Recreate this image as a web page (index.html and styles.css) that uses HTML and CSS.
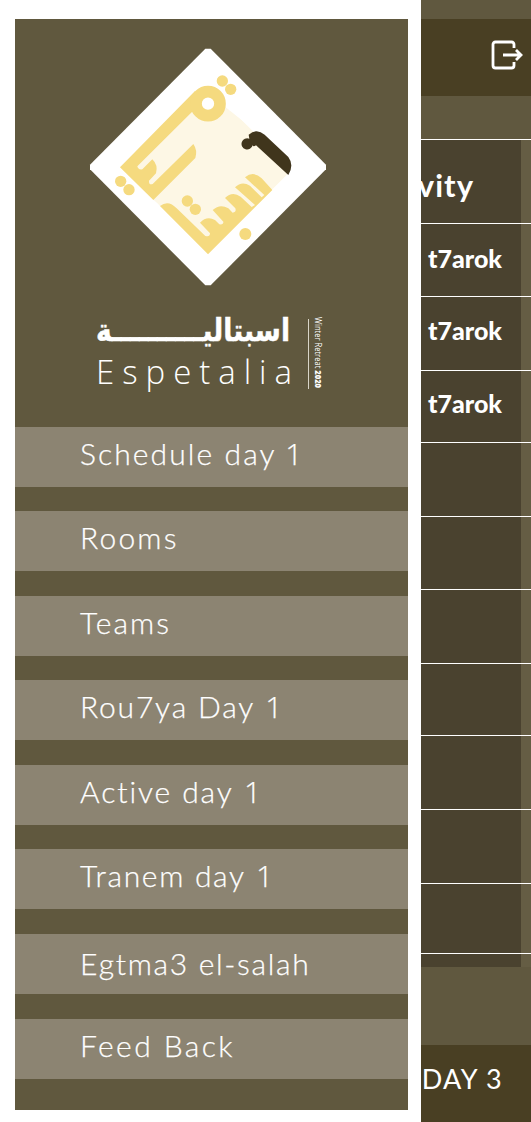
FILE: index.html
```html
<!DOCTYPE html>
<html lang="en">
<head>
<meta charset="utf-8">
<title>Espetalia</title>
<link rel="stylesheet" href="styles.css">
</head>
<body>
<div class="screen">
  <aside class="drawer">
    <svg class="emblem" viewBox="0 0 768 768" aria-hidden="true">
      <path fill="#fff" d="M376 26H392L738 374V388L392 736H376L30 388V374Z"/>
      <path fill="#fdf7e5" d="M384 140L628 382L620 405L384 640L120 382Z"/>
      <path fill="#fff" d="M425 175L530 255L520 268L435 200Z"/>
      <path fill="#fff" d="M110 382L232 490L384 650L374 655L225 500L105 392Z"/>
      <g fill="#f5da7f">
        <path d="M345 153L120 382L220 480L346 354Q353 330 340 312L218 432Q206 436 207 422L228 400Q235 375 217 358L187 388Q174 390 172 379L335 217L350 212Z"/>
        <path d="M240 498Q265 478 290 505L376 588Q390 592 390 580L360 548Q380 527 405 540L418 553Q431 555 430 545L398 510Q420 490 445 505L458 518Q470 517 466 505L435 474Q457 452 482 470L515 501L525 495L465 442Q485 422 510 437L545 472L553 465L495 412Q520 391 545 415L577 450L384 643Z"/>
        <circle cx="427" cy="123" r="17"/><circle cx="452" cy="148" r="17"/>
        <circle cx="122" cy="424" r="17"/><circle cx="147" cy="449" r="17"/>
        <circle cx="322" cy="483" r="17"/><circle cx="346" cy="508" r="17"/>
        <circle cx="496" cy="582" r="18"/>
      </g>
      <circle cx="384" cy="191" r="36" fill="#fff" stroke="#f5da7f" stroke-width="35"/>
      <path fill="#40351c" d="M506 284Q530 263 554 284L625 351Q643 375 625 405L528 316Q520 322 518 316A17 17 0 1 1 508 296Z"/>
    </svg>
    <svg class="wordmark" viewBox="80 300 256 110">
      <text class="wm-ar" x="96" y="341" textLength="194" lengthAdjust="spacingAndGlyphs" direction="ltr">اسبتاليــــــــــة</text>
      <text class="wm-en" x="96" y="384" textLength="196" lengthAdjust="spacing">Espetalia</text>
      <path d="M308.5 319V389" stroke="#d9d5c8" stroke-width="1"/>
      <text class="wm-side" transform="translate(315 317) rotate(90)" textLength="71" lengthAdjust="spacingAndGlyphs">Winter Retreat <tspan class="wm-year">2020</tspan></text>
    </svg>
    <nav class="menu">
      <a class="item schedule">Schedule day <span class="num">1</span></a>
      <a class="item rooms">Rooms</a>
      <a class="item teams">Teams</a>
      <a class="item rouhya">Rou7ya Day <span class="num">1</span></a>
      <a class="item active">Active day <span class="num">1</span></a>
      <a class="item tranem">Tranem day <span class="num">1</span></a>
      <a class="item egtma3">Egtma3 el-salah</a>
      <a class="item feedback">Feed Back</a>
    </nav>
  </aside>
  <main class="page">
    <header class="topbar">
      <svg class="exit" viewBox="0 0 34 32" aria-hidden="true">
        <path d="M24 9V5.500Q24 3 21.500 3H5.500Q3 3 3 5.500V26.500Q3 29 5.500 29H21.500Q24 29 24 26.500V23M13 16H31M26 11L31 16L26 21"/>
      </svg>
    </header>
    <section class="table">
      <div class="row head"><span>Activity</span></div>
      <div class="row r73"><span>t7arok</span></div>
      <div class="row r74"><span>t7arok</span></div>
      <div class="row r72"><span>t7arok</span></div>
      <div class="row r74"></div>
      <div class="row r73"></div>
      <div class="row r74"></div>
      <div class="row r72"></div>
      <div class="row r74"></div>
      <div class="row r74"></div>
      <div class="row r70"></div>
      <div class="row last"></div>
    </section>
    <footer class="tabbar">DAY 3</footer>
  </main>
</div>
</body>
</html>
```
FILE: styles.css
```css
* { box-sizing: border-box; }
body { margin: 0; background: #fff; }
.screen {
  display: grid;
  grid-template-columns: 393px 110px;
  column-gap: 13px;
  padding-left: 15px;
  width: 531px;
  height: 1122px;
  overflow: hidden;
  color: #fff;
  font-family: Lato, "Open Sans", sans-serif;
}
.drawer {
  margin-top: 19px;
  height: 1091px;
  padding-top: 21px;
  background: #60583e;
}
.emblem { display: block; width: 256px; height: 256px; margin-left: 65px; }
.wordmark { display: block; width: 256px; height: 110px; margin: 4px 0 0 65px; fill: #fff; }
.wm-ar { font: bold 31px "DejaVu Sans", sans-serif; stroke: #fff; stroke-width: 0.5; }
.wm-en { font: 300 33px "Open Sans", sans-serif; }
.wm-side { font: 8.5px "Open Sans", sans-serif; }
.wm-year { font-weight: 800; }
.menu { display: grid; grid-auto-rows: 60px; row-gap: 24.55px; margin-top: 16.7px; }
.item {
  padding-left: 65px;
  background: #8c8472;
  font-size: 30px;
  font-weight: 300;
  line-height: 52px;
  white-space: nowrap;
  -webkit-text-stroke: 0.25px #fff;
}
.num { margin-left: 1px; font-family: "Open Sans", sans-serif; line-height: 1; }
.schedule { letter-spacing: 2.1px; }
.schedule .num { margin-left: -1px; }
.rooms { letter-spacing: 2.2px; }
.teams { letter-spacing: 2.1px; }
.rouhya { letter-spacing: 1.8px; }
.active { letter-spacing: 1.9px; }
.tranem { letter-spacing: 1.7px; }
.egtma3 { letter-spacing: 1.7px; line-height: 58px; }
.feedback { letter-spacing: 2.4px; }

.page { display: flex; flex-direction: column; padding-top: 19px; background: #60583f; overflow: hidden; }
.topbar { display: flex; justify-content: flex-end; height: 77px; padding: 20px 7px 0 0; background: #493f23; }
.exit { width: 34px; height: 32px; fill: none; stroke: #fff; stroke-width: 2.8; }
.table { margin-top: 43px; background: linear-gradient(to right, #4a422f 100px, #655d44 100px); height: 828px; }
.row {
  display: flex;
  justify-content: flex-end;
  padding-right: 29px;
  border-top: 1px solid #fff;
  font-size: 25px;
  font-weight: 900;
  line-height: 68px;
  white-space: nowrap;
}
.r74 { line-height: 66px; }
.head { height: 84px; padding-right: 57px; font-size: 31px; font-weight: 700; line-height: 90px; letter-spacing: 1px; }
.r70 { height: 70px; }
.r72 { height: 72px; line-height: 64px; }
.r73 { height: 73px; }
.r74 { height: 74px; }
.last { height: 14px; }
.tabbar { margin-top: 78px; height: 77px; padding-right: 28px; background: #493f23; text-align: right; font-size: 27px; line-height: 68px; letter-spacing: 1.3px; white-space: nowrap; }
```
